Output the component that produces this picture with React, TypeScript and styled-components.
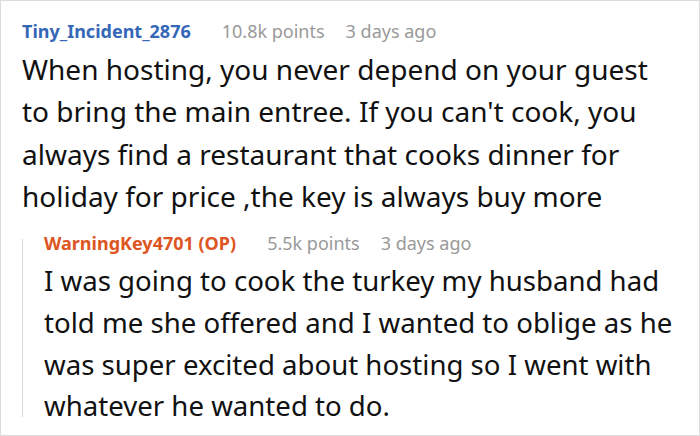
import styled, { createGlobalStyle } from "styled-components";

const Global = createGlobalStyle`
  html, body {
    margin: 0;
    padding: 0;
    background: #fff;
  }
  body {
    font-family: "Noto Sans", "Open Sans", sans-serif;
  }
`;

const Card = styled.div`
  box-sizing: border-box;
  width: 700px;
  height: 436px;
  border: 1px solid #dcdcdc;
  background: #fff;
  padding: 17px 22px 0 21px;
  overflow: hidden;
`;

const Comment = styled.div`
  display: flex;
  flex-direction: column;
`;

const Meta = styled.div`
  display: flex;
  align-items: baseline;
  font-size: 18px;
  line-height: 26px;
  color: #999;
`;

const Author = styled.span<{ $op?: boolean }>`
  font-weight: 700;
  color: ${(p) => (p.$op ? "#dd5522" : "#3567b8")};
  margin-right: 31px;
`;

const Info = styled.span`
  margin-right: 21px;
`;

const Body = styled.p<{ $reply?: boolean }>`
  margin: 4px 0 0;
  font-size: ${(p) => (p.$reply ? "27.6px" : "28px")};
  line-height: ${(p) => (p.$reply ? "41.7px" : "42.3px")};
  color: #111;
`;

const Reply = styled.div`
  position: relative;
  margin: 13px -12px 0 0;
  padding-left: 22px;
  display: flex;
  flex-direction: column;

  &::before {
    content: "";
    position: absolute;
    left: 0;
    top: 9px;
    bottom: 10px;
    width: 1px;
    background: #d6d6d6;
  }
`;

export default function App() {
  return (
    <>
      <Global />
      <Card>
        <Comment>
          <Meta>
            <Author>Tiny_Incident_2876</Author>
            <Info>10.8k points</Info>
            <Info>3 days ago</Info>
          </Meta>
          <Body>
            When hosting, you never depend on your guest to bring the main entree. If you can't cook, you
            always find a restaurant that cooks dinner for holiday for price ,the key is always buy more
          </Body>
        </Comment>
        <Reply>
          <Meta>
            <Author $op>WarningKey4701 (OP)</Author>
            <Info>5.5k points</Info>
            <Info>3 days ago</Info>
          </Meta>
          <Body $reply>
            I was going to cook the turkey my husband had told me she offered and I wanted to oblige as he
            was super excited about hosting so I went with whatever he wanted to do.
          </Body>
        </Reply>
      </Card>
    </>
  );
}
